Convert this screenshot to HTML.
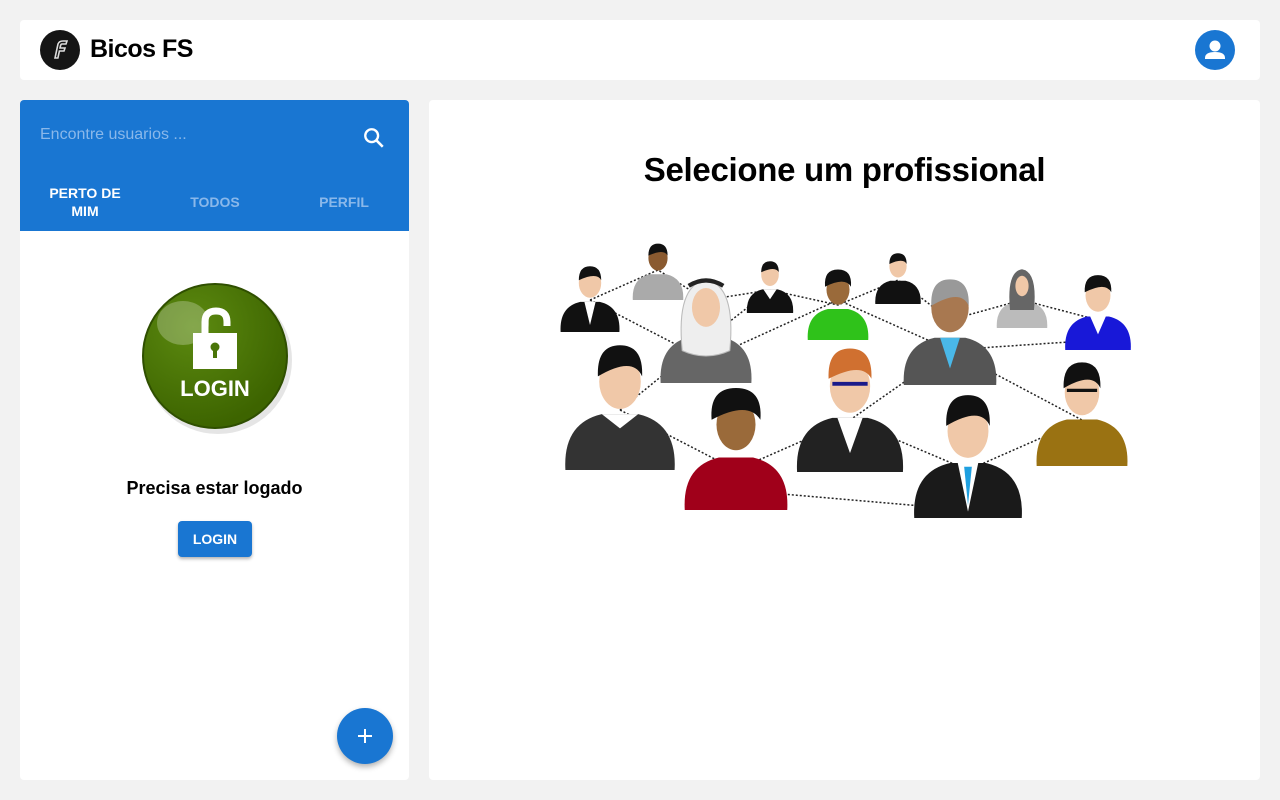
<!DOCTYPE html>
<html><head><meta charset="utf-8"><style>
*{box-sizing:border-box;margin:0;padding:0}
body{width:1280px;height:800px;background:#f2f2f2;font-family:"Liberation Sans",Roboto,sans-serif;position:relative;overflow:hidden}
.hdr{position:absolute;left:20px;top:20px;width:1240px;height:60px;background:#fff;border-radius:4px}
.logo{position:absolute;left:20px;top:10px;width:40px;height:40px;border-radius:50%;background:#151515}
.title{position:absolute;left:70px;top:15px;font-size:25px;font-weight:bold;color:#000;letter-spacing:-0.5px}
.av{position:absolute;left:1175px;top:10px;width:40px;height:40px;border-radius:50%;background:#1976d2}
.left{position:absolute;left:20px;top:100px;width:389px;height:680px;background:#fff;border-radius:4px;overflow:hidden}
.bar{height:131px;background:#1976d2;position:relative}
.ph{position:absolute;left:20px;top:26px;font-size:16px;color:#8ab8ea}
.tab{position:absolute;top:84px;width:130px;text-align:center;font-size:14px;font-weight:bold;line-height:18px;color:#8ab8ea}
.right{position:absolute;left:429px;top:100px;width:831px;height:680px;background:#fff;border-radius:4px}
h1{position:absolute;left:0;width:831px;top:51px;text-align:center;font-size:33px;font-weight:bold;letter-spacing:-0.3px;color:#000}
.btn{position:absolute;left:158px;top:421px;width:74px;height:36px;background:#1976d2;color:#fff;border-radius:4px;font-size:14px;font-weight:bold;text-align:center;line-height:36px;box-shadow:0 2px 3px rgba(0,0,0,.3)}
.fab{position:absolute;left:317px;top:608px;width:56px;height:56px;border-radius:50%;background:#1976d2;box-shadow:0 3px 6px rgba(0,0,0,.3)}
</style></head><body>
<div class="hdr">
 <div class="logo"><svg width="40" height="40" viewBox="0 0 40 40"><path d="M15 28 L18 14 Q19 11 23 11 L27 11 L26 14 L22 14 Q21 14 20.6 15.5 L20 18 L25 18 L24 21 L19.4 21 L17.9 28 Z" fill="none" stroke="#ddd" stroke-width="1.6"/></svg></div>
 <div class="title">Bicos FS</div>
 <div class="av"><svg width="40" height="40" viewBox="0 0 40 40"><circle cx="20" cy="16" r="5.5" fill="#fff"/><path d="M10 28 Q10 22 20 22 Q30 22 30 28 L30 29 L10 29Z" fill="#fff"/></svg></div>
</div>
<div class="left">
 <div class="bar">
  <div class="ph">Encontre usuarios ...</div>
  <svg style="position:absolute;left:340px;top:24px" width="28" height="28" viewBox="0 0 24 24"><circle cx="10" cy="10" r="5.5" fill="none" stroke="#fff" stroke-width="2"/><path d="M14 14 L19.5 19.5" stroke="#fff" stroke-width="2.2"/></svg>
  <div class="tab" style="left:0;top:84px;color:#fff">PERTO DE<br>MIM</div>
  <div class="tab" style="left:130px;top:93px">TODOS</div>
  <div class="tab" style="left:259px;top:93px">PERFIL</div>
 </div>
 <svg style="position:absolute;left:118px;top:178px" width="160" height="160" viewBox="0 0 160 160">
  <defs><radialGradient id="g" cx="35%" cy="30%" r="70%"><stop offset="0" stop-color="#5c8a10"/><stop offset="1" stop-color="#3d6400"/></radialGradient></defs>
  <circle cx="80" cy="82" r="74" fill="#ccc" opacity=".5"/>
  <circle cx="77" cy="78" r="72" fill="url(#g)" stroke="#2f4f00" stroke-width="2"/>
  <ellipse cx="45" cy="45" rx="26" ry="22" fill="#fff" opacity=".25"/>
  <path d="M67 55 V44 Q67 33 78 33 Q89 33 89 44 V48" fill="none" stroke="#fff" stroke-width="7"/>
  <rect x="55" y="55" width="44" height="36" fill="#fff"/>
  <circle cx="77" cy="69" r="4.5" fill="#4a7508"/><rect x="75" y="69" width="4" height="11" fill="#4a7508"/>
  <text x="77" y="118" text-anchor="middle" font-family="Liberation Sans" font-weight="bold" font-size="22" fill="#fff">LOGIN</text>
 </svg>
 <div style="position:absolute;left:0;width:389px;top:378px;text-align:center;font-size:18px;font-weight:bold">Precisa estar logado</div>
 <div class="btn">LOGIN</div>
 <div class="fab"><svg width="56" height="56" viewBox="0 0 56 56"><path d="M28 21V35M21 28H35" stroke="#fff" stroke-width="2"/></svg></div>
</div>
<div class="right">
 <h1>Selecione um profissional</h1>
 <svg style="position:absolute;left:0;top:0" width="831" height="680" viewBox="429 100 831 680">
  <defs>
   <g id="p"><path d="M-42 100 Q-44 64 -14 57 L14 57 Q44 64 42 100 Z"/></g>
  </defs>
  <g stroke="#222" stroke-width="1.5" stroke-dasharray="2 2" fill="none">
   <path d="M590 300 L658 270 L706 300 L770 290 L838 305 L898 280 L950 320 L1022 300 L1098 320"/>
   <path d="M590 300 L706 360 L838 300 L950 350 L1098 340"/>
   <path d="M620 410 L706 340 M620 410 L736 470 L850 420 L968 470 L1082 420 L950 350 M736 490 L968 510 M850 420 L950 350 M706 340 L770 290"/>
  </g>
  <g transform="translate(590,262) scale(.7)"><use href="#p" fill="#111"/><path d="M-8 57 L0 90 L8 57Z" fill="#fff"/><ellipse cx="0" cy="30" rx="16" ry="21" fill="#f0c8a8"/><path d="M-16 26 Q-16 6 0 6 Q16 6 16 26 Q10 14 -16 26Z" fill="#111"/></g>
  <g transform="translate(658,240) scale(.6)"><use href="#p" fill="#aaa"/><ellipse cx="0" cy="30" rx="16" ry="21" fill="#8a5a30"/><path d="M-16 26 Q-16 6 0 6 Q16 6 16 26 Q10 14 -16 26Z" fill="#111"/></g>
  <g transform="translate(706,275) scale(1.08)"><use href="#p" fill="#666"/><path d="M-22 70 Q-28 10 0 4 Q28 10 22 70 Q0 80 -22 70Z" fill="#eee" stroke="#bbb"/><ellipse cx="0" cy="30" rx="13" ry="18" fill="#f0c8a8"/><path d="M-16 10 Q0 0 16 10" stroke="#222" stroke-width="4" fill="none"/></g>
  <g transform="translate(770,258) scale(.55)"><use href="#p" fill="#111"/><path d="M-12 57 L0 75 L12 57Z" fill="#fff"/><ellipse cx="0" cy="30" rx="16" ry="21" fill="#f0c8a8"/><path d="M-16 26 Q-16 6 0 6 Q16 6 16 26 Q10 14 -16 26Z" fill="#111"/></g>
  <g transform="translate(838,268) scale(.72)"><use href="#p" fill="#2fc21a"/><ellipse cx="0" cy="30" rx="16" ry="21" fill="#9a6a3a"/><path d="M-18 26 Q-20 2 0 2 Q20 2 18 26 Q10 12 -18 26Z" fill="#111"/></g>
  <g transform="translate(898,250) scale(.54)"><use href="#p" fill="#111"/><ellipse cx="0" cy="30" rx="16" ry="21" fill="#f0c8a8"/><path d="M-16 26 Q-16 6 0 6 Q16 6 16 26 Q10 14 -16 26Z" fill="#111"/></g>
  <g transform="translate(950,275) scale(1.1)"><use href="#p" fill="#555"/><path d="M-9 57 L0 85 L9 57Z" fill="#4ab8e8"/><ellipse cx="0" cy="30" rx="17" ry="22" fill="#a87850"/><path d="M-17 28 Q-18 4 0 4 Q18 4 17 28 Q10 12 -17 28Z" fill="#999"/></g>
  <g transform="translate(1022,268) scale(.6)"><use href="#p" fill="#bbb"/><path d="M-20 70 Q-26 6 0 2 Q26 6 20 70Z" fill="#666"/><ellipse cx="0" cy="30" rx="11" ry="17" fill="#f0c8a8"/></g>
  <g transform="translate(1098,272) scale(.78)"><use href="#p" fill="#1818d8"/><path d="M-10 57 L0 80 L10 57Z" fill="#fff"/><ellipse cx="0" cy="30" rx="16" ry="21" fill="#f0c8a8"/><path d="M-17 26 Q-18 4 0 4 Q18 4 17 26 Q10 12 -17 26Z" fill="#111"/></g>
  <g transform="translate(620,340) scale(1.3)"><use href="#p" fill="#333"/><path d="M-14 57 L0 68 L14 57Z" fill="#fff"/><ellipse cx="0" cy="32" rx="16" ry="21" fill="#f0c8a8"/><path d="M-17 28 Q-18 4 0 4 Q18 4 17 28 Q10 12 -17 28Z" fill="#111"/></g>
  <g transform="translate(736,388) scale(1.22)"><use href="#p" fill="#a0001a"/><ellipse cx="0" cy="30" rx="16" ry="21" fill="#9a6a3a"/><path d="M-20 26 Q-22 0 0 0 Q22 0 20 26 Q10 10 -20 26Z" fill="#111"/></g>
  <g transform="translate(850,346) scale(1.26)"><use href="#p" fill="#222"/><path d="M-10 57 L0 85 L10 57Z" fill="#fff"/><ellipse cx="0" cy="32" rx="16" ry="21" fill="#f0c8a8"/><path d="M-17 26 Q-18 2 0 2 Q18 2 17 26 Q10 12 -17 26Z" fill="#d07030"/><path d="M-14 30 H14" stroke="#1a1a8a" stroke-width="3"/></g>
  <g transform="translate(968,390) scale(1.28)"><use href="#p" fill="#1a1a1a"/><path d="M-8 57 L0 95 L8 57Z" fill="#fff"/><path d="M-3 60 L0 90 L3 60Z" fill="#1fa0e0"/><ellipse cx="0" cy="32" rx="16" ry="21" fill="#f0c8a8"/><path d="M-17 28 Q-18 4 0 4 Q18 4 17 28 Q10 12 -17 28Z" fill="#111"/></g>
  <g transform="translate(1082,358) scale(1.08)"><use href="#p" fill="#9a7212"/><ellipse cx="0" cy="32" rx="16" ry="21" fill="#f0c8a8"/><path d="M-17 28 Q-18 4 0 4 Q18 4 17 28 Q10 12 -17 28Z" fill="#111"/><path d="M-14 30 H14" stroke="#111" stroke-width="3"/></g>
 </svg>
</div>
</body></html>
